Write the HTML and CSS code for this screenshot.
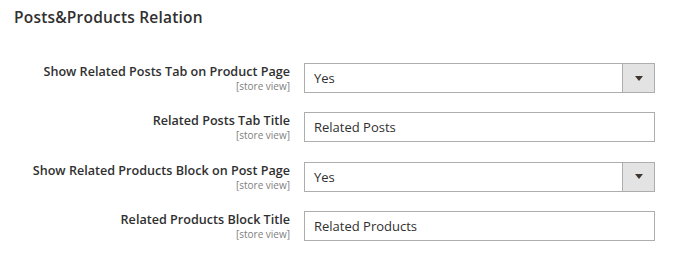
FILE: index.html
```html
<!DOCTYPE html>
<html lang="en">
<head>
    <meta charset="UTF-8">
    <title>Posts&amp;Products Relation</title>
    <link rel="stylesheet" href="styles.css">
</head>
<body>
<div class="section">
    <div class="section-title">Posts&amp;Products Relation</div>
    <div class="fieldset">
        <div class="field">
            <div class="field-label">
                <span class="label-text">Show Related Posts Tab on Product Page</span>
                <span class="scope">[store view]</span>
            </div>
            <div class="control select">
                <span class="value">Yes</span>
                <span class="arrow"></span>
            </div>
        </div>
        <div class="field">
            <div class="field-label">
                <span class="label-text">Related Posts Tab Title</span>
                <span class="scope">[store view]</span>
            </div>
            <div class="control">
                <span class="value">Related Posts</span>
            </div>
        </div>
        <div class="field">
            <div class="field-label">
                <span class="label-text">Show Related Products Block on Post Page</span>
                <span class="scope">[store view]</span>
            </div>
            <div class="control select">
                <span class="value">Yes</span>
                <span class="arrow"></span>
            </div>
        </div>
        <div class="field">
            <div class="field-label">
                <span class="label-text">Related Products Block Title</span>
                <span class="scope">[store view]</span>
            </div>
            <div class="control">
                <span class="value">Related Products</span>
            </div>
        </div>
    </div>
</div>
</body>
</html>
```

FILE: styles.css
```css
:root {
    --text-color: #303030;
    --scope-color: #808080;
    --border-color: #adadad;
    --arrow-bg: #e3e3e3;
}
body {
    margin: 0;
    background: #fff;
    font-family: 'Open Sans', sans-serif;
    color: var(--text-color);
}
.section {
    padding: 7px 14px 0 14px;
}
.section-title {
    font-size: 15.5px;
    font-weight: 600;
    line-height: 20px;
    letter-spacing: 0.2px;
}
.fieldset {
    display: flex;
    flex-direction: column;
    gap: 19.3px;
    margin-top: 36px;
}
.field {
    display: flex;
    align-items: flex-start;
    gap: 14px;
}
.field-label {
    width: 276px;
    display: flex;
    flex-direction: column;
    align-items: flex-end;
    text-align: right;
    padding-top: 1px;
}
.label-text {
    font-size: 12.6px;
    font-weight: 600;
    line-height: 16px;
}
.scope {
    font-size: 10px;
    line-height: 12px;
    color: var(--scope-color);
}
.control {
    width: 351px;
    height: 30px;
    box-sizing: border-box;
    border: 1px solid var(--border-color);
    display: flex;
    align-items: center;
    font-size: 13px;
    padding-left: 9px;
}
.control .value {
    flex: 1;
}
.select .arrow {
    width: 31px;
    align-self: stretch;
    background: var(--arrow-bg);
    border-left: 1px solid var(--border-color);
    display: flex;
    align-items: center;
    justify-content: center;
}
.select .arrow::after {
    content: "";
    border-left: 4px solid transparent;
    border-right: 4px solid transparent;
    border-top: 5px solid #41362f;
}
```
